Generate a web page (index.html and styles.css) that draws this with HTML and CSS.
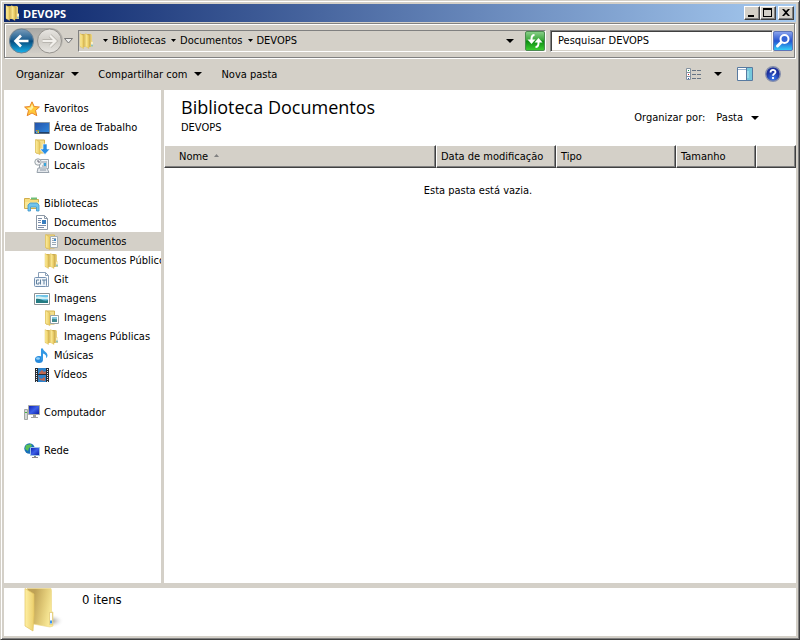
FILE: index.html
```html
<!DOCTYPE html>
<html lang="pt-BR">
<head>
<meta charset="utf-8">
<title>DEVOPS</title>
<link rel="stylesheet" href="styles.css">
</head>
<body>
<svg class="defs" aria-hidden="true">
  <defs>
    <linearGradient id="gold" x1="0" x2="1"><stop offset="0" stop-color="#fff0a0"/><stop offset="1" stop-color="#e6c65c"/></linearGradient>
    <linearGradient id="goldback" x1="0" x2="1"><stop offset=".5" stop-color="#c9a94e"/><stop offset="1" stop-color="#f0da84"/></linearGradient>
    <linearGradient id="bigflap" x1="0" x2="1"><stop offset="0" stop-color="#fff0a4"/><stop offset="1" stop-color="#eccf6c"/></linearGradient>
    <linearGradient id="bigback" x1="0" x2="1" y1="0" y2=".3"><stop offset=".3" stop-color="#bfa256"/><stop offset=".7" stop-color="#e2cb78"/><stop offset="1" stop-color="#f8e896"/></linearGradient>
    <linearGradient id="screen" x1="0" y1="0" x2="1" y2="1"><stop offset="0" stop-color="#0a1cb0"/><stop offset=".5" stop-color="#3c60e8"/><stop offset="1" stop-color="#0818a0"/></linearGradient>
    <linearGradient id="desk" x1="0" y1="0" x2="1" y2="1"><stop offset="0" stop-color="#2450a8"/><stop offset="1" stop-color="#2f8be0"/></linearGradient>
    <linearGradient id="back" x1="0" y1="0" x2="0" y2="1"><stop offset="0" stop-color="#7a9cba"/><stop offset=".45" stop-color="#1d5e90"/><stop offset=".5" stop-color="#064a7c"/><stop offset="1" stop-color="#18b4ee"/></linearGradient>
    <linearGradient id="fwd" x1="0" y1="0" x2="0" y2="1"><stop offset="0" stop-color="#e8e6e2"/><stop offset=".5" stop-color="#cfccc6"/><stop offset="1" stop-color="#e8e6e2"/></linearGradient>
    <linearGradient id="pill" x1="0" y1="0" x2="0" y2="1"><stop offset="0" stop-color="#aaa8a4"/><stop offset="1" stop-color="#d0cdc7"/></linearGradient>
    <linearGradient id="green" x1="0" y1="0" x2="0" y2="1"><stop offset="0" stop-color="#8cd08c"/><stop offset=".45" stop-color="#3aa83a"/><stop offset=".5" stop-color="#0b8a12"/><stop offset="1" stop-color="#3ed032"/></linearGradient>
    <linearGradient id="find" x1="0" y1="0" x2="0" y2="1"><stop offset="0" stop-color="#8ea6ee"/><stop offset=".5" stop-color="#2454d0"/><stop offset="1" stop-color="#35d4fa"/></linearGradient>
    <radialGradient id="help" cy=".8"><stop offset="0" stop-color="#3c7cf0"/><stop offset="1" stop-color="#1c2f9c"/></radialGradient>
    <radialGradient id="shade"><stop offset="0" stop-color="#888"/><stop offset="1" stop-color="#fff" stop-opacity="0"/></radialGradient>
    <symbol id="folder" viewBox="0 0 16 16">
      <path d="M1 1h6v13H1z" fill="url(#goldback)"/>
      <path d="M7 1h5l1 1v12H7z" fill="url(#goldback)"/>
      <path d="M1 .5 4.500 2.500v13L1 13.500z" fill="url(#gold)" stroke="#dcbc54" stroke-width=".4"/>
      <path d="M6.500.5 10 2.500v13l-3.500-2z" fill="url(#gold)" stroke="#dcbc54" stroke-width=".4"/>
      <path d="M12 8.500h2V14h-2z" fill="#f3de8d"/>
      <path d="M12.500 9h1v3h-1z" fill="#fff"/><path d="M12.500 11.500h1v2h-1z" fill="#37a3ea"/>
    </symbol>
    <symbol id="openfolder" viewBox="0 0 16 16">
      <path d="M2 1h8.500v13H2z" fill="#f3de8d" stroke="#d6b452"/>
      <path d="M1.500.5 6 3v12.500l-4.500-2z" fill="url(#gold)" stroke="#d9b850" stroke-width=".6"/>
    </symbol>
  </defs>
</svg>
<div class="window">
  <header class="titlebar">
    <svg class="icon16" viewBox="0 0 16 16"><use href="#folder"/></svg>
    <h1 class="caption">DEVOPS</h1>
    <div class="caption-buttons">
      <button class="capbtn" aria-label="Minimizar"><svg viewBox="0 0 12 10"><path d="M2 7h6v2H2z"/></svg></button>
      <button class="capbtn" aria-label="Maximizar"><svg viewBox="0 0 12 10"><path d="M1 0h9v9H1zM2 2v6h7V2z" fill-rule="evenodd"/></svg></button>
      <button class="capbtn capbtn-close" aria-label="Fechar"><svg viewBox="0 0 12 10"><path d="M2 1h2l2 2 2-2h2L7 4.500 10 8H8L6 6 4 8H2l3-3.500z"/></svg></button>
    </div>
  </header>

  <nav class="navbar" aria-label="Endereço">
    <div class="travel">
      <svg class="travel-art" viewBox="0 0 56 28">
        <rect x="1" y="1" width="54" height="25" rx="12.500" fill="url(#pill)"/>
        <circle cx="13.500" cy="14" r="12" fill="url(#back)" stroke="#6c8294"/>
        <circle cx="41.500" cy="14" r="12" fill="url(#fwd)" stroke="#96938e"/>
        <path d="m13 8.500-5.500 5.500 5.500 5.500M8 14h12.500" fill="none" stroke="#fff" stroke-width="2.600"/>
        <path d="m42 8.500 5.500 5.500-5.500 5.500M47 14H34.500" fill="none" stroke="#b8b5af" stroke-width="3.800"/>
        <path d="m42 8.500 5.500 5.500-5.500 5.500M47 14H34.500" fill="none" stroke="#f2f0ec" stroke-width="2.200"/>
      </svg>
      <button class="travel-btn" aria-label="Voltar"></button>
      <button class="travel-btn" aria-label="Avançar"></button>
    </div>
    <button class="plain" aria-label="Páginas recentes"><svg class="recent" viewBox="0 0 9 6"><path d="M.5.5h8l-4 4.500z" fill="#eee" stroke="#777"/></svg></button>
    <div class="address">
      <svg class="icon16" viewBox="0 0 16 16"><use href="#folder"/></svg>
      <svg class="crumb-arrow first" viewBox="0 0 5 3"><path d="M0 0h5L2.500 3z"/></svg>
      <a href="#">Bibliotecas</a>
      <svg class="crumb-arrow" viewBox="0 0 5 3"><path d="M0 0h5L2.500 3z"/></svg>
      <a href="#">Documentos</a>
      <svg class="crumb-arrow" viewBox="0 0 5 3"><path d="M0 0h5L2.500 3z"/></svg>
      <a href="#">DEVOPS</a>
      <button class="plain push" aria-label="Locais anteriores"><svg class="arrow" viewBox="0 0 8 4"><path d="M0 0h8L4 4z"/></svg></button>
      <button class="plain refresh" aria-label="Atualizar"><svg viewBox="0 0 20 20">
        <rect x=".5" y=".5" width="19" height="19" rx="1.500" fill="url(#green)" stroke="#4c8a50"/>
        <path d="M9.500 4C7 4 6.500 6 6.500 8v1" fill="none" stroke="#fff" stroke-width="2"/><path d="M2.500 8.500h8l-4 4.500z" fill="#fff"/>
        <path d="M10.500 16c2.500 0 3-2 3-4v-1" fill="none" stroke="#fff" stroke-width="2"/><path d="M9.500 11.500h8l-4-4.500z" fill="#fff"/>
      </svg></button>
    </div>
    <input class="search" type="text" aria-label="Pesquisar" value="Pesquisar DEVOPS">
    <button class="plain" aria-label="Pesquisar agora"><svg class="find" viewBox="0 0 20 20">
      <rect x=".5" y=".5" width="19" height="19" rx="1.500" fill="url(#find)" stroke="#5c74b8"/>
      <path d="m4.500 15 4-4" stroke="#fff" stroke-width="3" stroke-linecap="round"/>
      <circle cx="11.500" cy="8" r="4" fill="#3565d5" stroke="#fff" stroke-width="2"/>
    </svg></button>
  </nav>

  <div class="toolbar">
    <button class="plain tool tool-organize">Organizar <svg class="arrow" viewBox="0 0 8 4"><path d="M0 0h8L4 4z"/></svg></button>
    <button class="plain tool tool-share">Compartilhar com <svg class="arrow" viewBox="0 0 8 4"><path d="M0 0h8L4 4z"/></svg></button>
    <button class="plain tool">Nova pasta</button>
    <div class="view-tools">
      <button class="plain" aria-label="Exibição"><svg class="icon16" viewBox="0 0 16 16">
        <path d="M.5 2.500h4v11h-4zM.5 6.500h4M.5 10.500h4" fill="#fff" stroke="#8592a0"/>
        <path d="M2 4h1v1H2z" fill="#1c9a40"/><path d="M2 8h1v1H2z" fill="#d02020"/><path d="M2 12h1v1H2z" fill="#2050b0"/>
        <path d="M6 4.500h4m1 0h4M6 8.500h4m1 0h4M6 12.500h4m1 0h4" stroke="#667484"/>
      </svg></button>
      <button class="plain" aria-label="Mais opções"><svg class="arrow" viewBox="0 0 8 4"><path d="M0 0h8L4 4z"/></svg></button>
      <button class="plain pane" aria-label="Painel de visualização"><svg class="icon16" viewBox="0 0 16 16">
        <path d="M.5 1.500h15v13H.5z" fill="#fff" stroke="#587aa0"/><path d="M1 3.500h9" stroke="#9ab0cc"/>
        <path d="M10 2h5v12h-5z" fill="#74c8dc"/><path d="M9.500 2v12" stroke="#587aa0"/><path d="M11 5v7" stroke="#b8ecf4"/>
      </svg></button>
      <button class="plain" aria-label="Ajuda"><svg class="icon16" viewBox="0 0 16 16">
        <circle cx="8" cy="8" r="7.300" fill="url(#help)" stroke="#8790ac" stroke-width="1.400"/>
        <path d="M5.500 6.500c0-3.500 5-3.300 5-.4 0 1.800-2.500 1.700-2.500 3.700M8 11v2" fill="none" stroke="#fff" stroke-width="1.800"/>
      </svg></button>
    </div>
  </div>

  <div class="content">
    <nav class="tree" aria-label="Pastas">
      <ul>
        <li><a href="#"><svg class="icon16" viewBox="0 0 16 16"><path d="m8 .8 2.200 4.700 5.200.5-3.900 3.500 1.300 5.200L8 12l-4.800 2.700 1.300-5.200L.6 6l5.200-.5z" fill="#ffc83a" stroke="#e8862a"/><path d="m8 3 1.400 3.500L7 9.500 3 7l3.500-.5z" fill="#fff2a0"/></svg>Favoritos</a></li>
        <li class="l1"><a href="#"><svg class="icon16" viewBox="0 0 16 16"><path d="M.5 2.500h15v11H.5z" fill="url(#desk)" stroke="#8c98a4"/><path d="M1 12h14v1.500H1z" fill="#204068"/><path d="M2 10h1.500v1.500H2z" fill="#e86830"/><path d="M3.500 10H5v1.500H3.500z" fill="#70c040"/><path d="M2 11.500h1.500V13H2z" fill="#40b0f0"/><path d="M3.500 11.500H5V13H3.500z" fill="#f0c030"/></svg>Área de Trabalho</a></li>
        <li class="l1"><a href="#"><svg class="icon16" viewBox="0 0 16 16"><use href="#openfolder"/><path d="M9 5h4v5h3l-5 5.500L6 10h3z" fill="#2a8ee4" stroke="#fff" stroke-width=".6"/></svg>Downloads</a></li>
        <li class="l1"><a href="#"><svg class="icon16" viewBox="0 0 16 16"><path d="M5.500 1.500h9v9h-9z" fill="#f0f3f6" stroke="#98a2ac"/><path d="M4 10h9l2 4.500H3z" fill="#e4e8ec" stroke="#98a2ac"/><path d="M8 4h5M9 6h4M8 8h5M6 12h6" stroke="#8a96a4"/><path d="M10 5h2v3h-2z" fill="#38a6dc"/><circle cx="4" cy="4" r="3.200" fill="#f2f4f5" stroke="#98a2a8"/><path d="M4 2v2h2" fill="none" stroke="#667"/></svg>Locais</a></li>
      </ul>
      <ul>
        <li><a href="#"><svg class="icon16" viewBox="0 0 16 16"><path d="M.5 2.500h5l1 1h8v9H.5z" fill="#f6dd80" stroke="#d0ad4c"/><path d="M7 1.500h6v2H7z" fill="#6ebf78"/><path d="M1 6h14v6H1z" fill="#f9e797"/><path d="M4 15V9l2-2h7l2 2v6h-2.500v-4h-6v4z" fill="#72c4ec" stroke="#3b94cc" stroke-width=".8"/></svg>Bibliotecas</a></li>
        <li class="l1"><a href="#"><svg class="icon16" viewBox="0 0 16 16"><path d="M2.500.5h8l3 3v11h-11z" fill="#fff" stroke="#8c98a6"/><path d="M10.500.5v3h3" fill="none" stroke="#8c98a6"/><path d="M4 3.500h4M4 5.500h3M4 7.500h3M4 10.500h8M4 12.500h6" stroke="#7b8daa"/><path d="M8 5h4v4H8z" fill="#397dbe"/></svg>Documentos</a></li>
        <li class="l2 selected"><a href="#" aria-current="page"><svg class="icon16" viewBox="0 0 16 16"><use href="#openfolder"/><path d="M6.500 2.500h7v11h-7z" fill="#f9fbfc" stroke="#a6b0b6"/><path d="M8 4.500h4M8 6.500h2M8 8.500h4M8 10.500h4" stroke="#9aa8b6"/><path d="M10 5h2v2h-2z" fill="#468cca"/></svg>Documentos</a></li>
        <li class="l2"><a href="#"><svg class="icon16" viewBox="0 0 16 16"><use href="#folder"/></svg>Documentos Públicos</a></li>
        <li class="l1"><a href="#"><svg class="icon16" viewBox="0 0 16 16"><path d="M4.500 5V.5h7l3 3v11H12" fill="#fff" stroke="#8aa0b8"/><path d="M11.500.5v3h3" fill="none" stroke="#8aa0b8"/><rect x=".5" y="5.500" width="12" height="9" rx="1" fill="#f0f5fa" stroke="#7692b2"/><path d="M5 8H2.500v4H5v-2M6.500 7.500v5M8 8h4m-2 0v4.500" fill="none" stroke="#60809e"/></svg>Git</a></li>
        <li class="l1"><a href="#"><svg class="icon16" viewBox="0 0 16 16"><path d="M.5 2.500h15v11H.5z" fill="#fff" stroke="#8c9296"/><path d="M2 4h12v8H2z" fill="#70c4e8"/><path d="M2 6c4-2 5 1 12 0v2H2z" fill="#d2f0f4"/><path d="M2 8c4-1 7 3 12 1v3H2z" fill="#247b82"/></svg>Imagens</a></li>
        <li class="l2"><a href="#"><svg class="icon16" viewBox="0 0 16 16"><use href="#openfolder"/><path d="M6.500 5.500h8v8h-8z" fill="#fff" stroke="#98a2a6"/><path d="M8 7h5v5H8z" fill="#85c8e0"/><path d="M8 9c2-1 3 1 5 0v3H8z" fill="#428a90"/></svg>Imagens</a></li>
        <li class="l2"><a href="#"><svg class="icon16" viewBox="0 0 16 16"><use href="#folder"/></svg>Imagens Públicas</a></li>
        <li class="l1"><a href="#"><svg class="icon16" viewBox="0 0 16 16"><ellipse cx="5" cy="11.500" rx="4" ry="3.500" fill="#2589dc"/><path d="M7 12V.5h2c0 3 4.500 3.500 4.500 7 0 1.500-1 2.500-1.500 2.500.8-2-.5-4-3-4.500V12z" fill="#3298e4"/><ellipse cx="4" cy="10.500" rx="2" ry="1.300" fill="#92d2fa"/></svg>Músicas</a></li>
        <li class="l1"><a href="#"><svg class="icon16" viewBox="0 0 16 16"><path d="M1 1h14v14H1z" fill="#292d34"/><path d="M4 1h8v6H4zM4 8h8v7H4z" fill="#2e83cc"/><path d="m5 6 3-3 2 2 2-1v3H5zM4 9l3 3 4-2v4l-5-1z" fill="#bd6853"/><path d="M2.500 2v13M13.500 2v13" stroke="#f0f3f5" stroke-dasharray="1 1"/></svg>Vídeos</a></li>
      </ul>
      <ul>
        <li><a href="#"><svg class="icon16" viewBox="0 0 16 16"><path d="M4.500.5h11v9h-11z" fill="url(#screen)" stroke="#a9aaa8"/><path d="M9 10h3v2h2v1H7v-1h2z" fill="#a0a09e"/><path d="M.5 4.500h3v10h-3z" fill="#d5d8d6" stroke="#a2a6a4"/><path d="M1 7h2v1H1z" fill="#45b444"/></svg>Computador</a></li>
      </ul>
      <ul>
        <li><a href="#"><svg class="icon16" viewBox="0 0 16 16"><circle cx="5.500" cy="5.500" r="5.200" fill="#1870b8"/><path d="M2 2c2 0 4-1 5-1l1 2-3 2-1 3-3-2zM8 5l2-1v3H7z" fill="#5abf55"/><path d="M6.500 4.500h9v8h-9z" fill="url(#screen)" stroke="#9ec4e6"/><path d="M10 13h2v1h2v1H8v-1h2z" fill="#888"/></svg>Rede</a></li>
      </ul>
    </nav>

    <main class="main">
      <div class="library">
        <div>
          <h2 class="library-title">Biblioteca Documentos</h2>
          <p class="library-sub">DEVOPS</p>
        </div>
        <div class="arrange">
          <span>Organizar por:</span>
          <button class="plain arrange-btn">Pasta <svg class="arrow" viewBox="0 0 8 4"><path d="M0 0h8L4 4z"/></svg></button>
        </div>
      </div>
      <table class="files">
        <thead>
          <tr>
            <th class="col-name">Nome <svg class="sort" viewBox="0 0 5 3"><path d="M0 3h5L2.500 0z" fill="#808080"/></svg></th>
            <th class="col-mid">Data de modificação</th>
            <th class="col-mid">Tipo</th>
            <th class="col-size">Tamanho</th>
            <td class="col-rest"></td>
          </tr>
        </thead>
        <tbody><tr><td class="empty" colspan="5">Esta pasta está vazia.</td></tr></tbody>
      </table>
    </main>
  </div>

  <footer class="details">
    <svg class="bigfolder" viewBox="0 0 40 44">
      <ellipse cx="27" cy="33" rx="13" ry="7" fill="url(#shade)"/>
      <path d="M3 .5h24l.500 2V24H29v14l-3 1-17-3z" fill="url(#bigback)" stroke="#ecd684" stroke-width=".6"/>
      <path d="M1 .5 6 3.500 10 6v21l-1 16L1 38z" fill="url(#bigflap)" stroke="#e2c462" stroke-width=".7"/>
      <path d="M25.500 24.500h3v12h-3z" fill="#fff" stroke="#dfc46c" stroke-width=".7"/><path d="M26 32.500h2v3h-2z" fill="#3b94ec"/>
    </svg>
    <span>0 itens</span>
  </footer>
</div>
</body>
</html>
```
FILE: styles.css
```css
* { box-sizing: border-box; }

:root {
  --face: #d4d0c8;
  --shadow: #808080;
  --dark: #404040;
}

body {
  margin: 0;
  font: 11px/15px Tahoma, "DejaVu Sans Condensed", "DejaVu Sans", sans-serif;
  color: #000;
}

ul, h1, h2, p { margin: 0; padding: 0; }
ul { list-style: none; }
svg { display: block; flex: none; }
a { color: inherit; text-decoration: none; }
.defs { position: absolute; width: 0; height: 0; }

button, input { font: inherit; color: inherit; }
.plain { display: flex; align-items: center; padding: 0; border: 0; background: none; }

.icon16 { width: 16px; height: 16px; }
.arrow { width: 8px; height: 4px; }

.window {
  display: flex;
  flex-direction: column;
  min-height: 100vh;
  padding: 3px;
  background: var(--face);
  border: 1px solid;
  border-color: var(--face) var(--dark) var(--dark) var(--face);
  box-shadow: inset 1px 1px #fff, inset -1px -1px var(--shadow);
}

.titlebar {
  display: flex;
  align-items: center;
  gap: 2px;
  height: 18px;
  padding: 0 2px 0 1px;
  background: linear-gradient(90deg, #0a246a, #a6caf0);
}
.caption { color: #fff; font: bold 11px/15px Tahoma, "Open Sans", sans-serif; }
.caption-buttons { display: flex; margin-left: auto; }
.capbtn {
  width: 16px;
  height: 14px;
  padding: 1px;
  background: var(--face);
  border: 1px solid;
  border-color: #fff var(--dark) var(--dark) #fff;
  box-shadow: inset -1px -1px var(--shadow);
}
.capbtn svg { width: 12px; height: 10px; }
.capbtn-close { margin-left: 2px; }

.navbar {
  display: flex;
  align-items: center;
  height: 35px;
  margin: 1px 1px 0 0;
  padding: 0 1px 0 3px;
  border: 1px solid var(--shadow);
  box-shadow: inset 1px 1px #fff, 1px 1px #fff;
}
.travel { position: relative; display: flex; width: 56px; height: 28px; }
.travel-art { position: absolute; width: 100%; height: 100%; }
.travel-btn { position: relative; flex: 1; border: 0; border-radius: 50%; background: none; }
.recent { width: 9px; height: 6px; }
.address {
  display: flex;
  flex: 1;
  align-items: center;
  height: 22px;
  margin: 0 4px 0 5px;
  border: 1px solid;
  border-color: var(--shadow) #fff #fff var(--shadow);
}
.crumb-arrow { width: 5px; height: 3px; margin: 0 4px 0 5px; }
.crumb-arrow.first { margin-left: 8px; }
.push { margin-left: auto; }
.refresh { margin-left: 11px; }
.refresh svg, .find { width: 20px; height: 20px; }
.search {
  width: 223px;
  height: 22px;
  padding: 0 7px;
  background: #fff;
  border: 1px solid;
  border-color: var(--shadow) #fff #fff var(--shadow);
  border-radius: 0;
  box-shadow: inset 1px 1px var(--dark), inset -1px -1px var(--face);
}

.toolbar { display: flex; align-items: center; height: 32px; padding: 0 15px 0 12px; }
.tool { gap: 7px; }
.tool-organize, .tool-share { margin-right: 19px; }
.view-tools { display: flex; align-items: center; gap: 12px; margin-left: auto; }
.pane { margin-left: 3px; }

.content { display: flex; flex: 1; gap: 3px; }
.tree {
  flex: none;
  width: 157px;
  padding: 9px 0;
  overflow: hidden;
  background: #fff;
}
.tree ul { margin-bottom: 19px; }
.tree li { height: 19px; margin-left: 1px; padding-left: 19px; }
.tree .l1 { padding-left: 29px; }
.tree .l2 { padding-left: 39px; }
.tree .selected { background: var(--face); }
.tree a { display: flex; align-items: center; gap: 4px; height: 19px; white-space: nowrap; }

.main { flex: 1; min-width: 0; background: #fff; }
.library {
  display: flex;
  justify-content: space-between;
  align-items: flex-start;
  height: 55px;
  padding: 5px 37px 0 17px;
}
.library-title { font: 18px/24px "Segoe UI", "Open Sans", sans-serif; margin-bottom: 1px; }
.arrange { display: flex; gap: 11px; margin-top: 15px; }
.arrange-btn { gap: 8px; }

.files { width: 100%; table-layout: fixed; border-spacing: 0; }
.files thead th, .files thead td {
  height: 23px;
  padding: 0 0 0 4px;
  background: var(--face);
  border: 1px solid;
  border-color: #fff var(--dark) var(--dark) #fff;
  box-shadow: inset -1px -1px var(--shadow);
  font-weight: normal;
  text-align: left;
  white-space: nowrap;
}
.files thead .col-name { padding-left: 14px; }
.col-mid { width: 120px; }
.col-size { width: 80px; }
.col-rest { width: 40px; }
.sort { display: inline-block; width: 5px; height: 3px; margin-left: 3px; vertical-align: 3px; }
.empty { padding: 15px 4px 0 0; text-align: center; }

.details {
  display: flex;
  align-items: flex-start;
  gap: 18px;
  height: 48px;
  margin-top: 5px;
  padding-left: 20px;
  background: #fff;
  font-size: 13px;
  line-height: 24px;
}
.bigfolder { width: 40px; height: 44px; }
```
